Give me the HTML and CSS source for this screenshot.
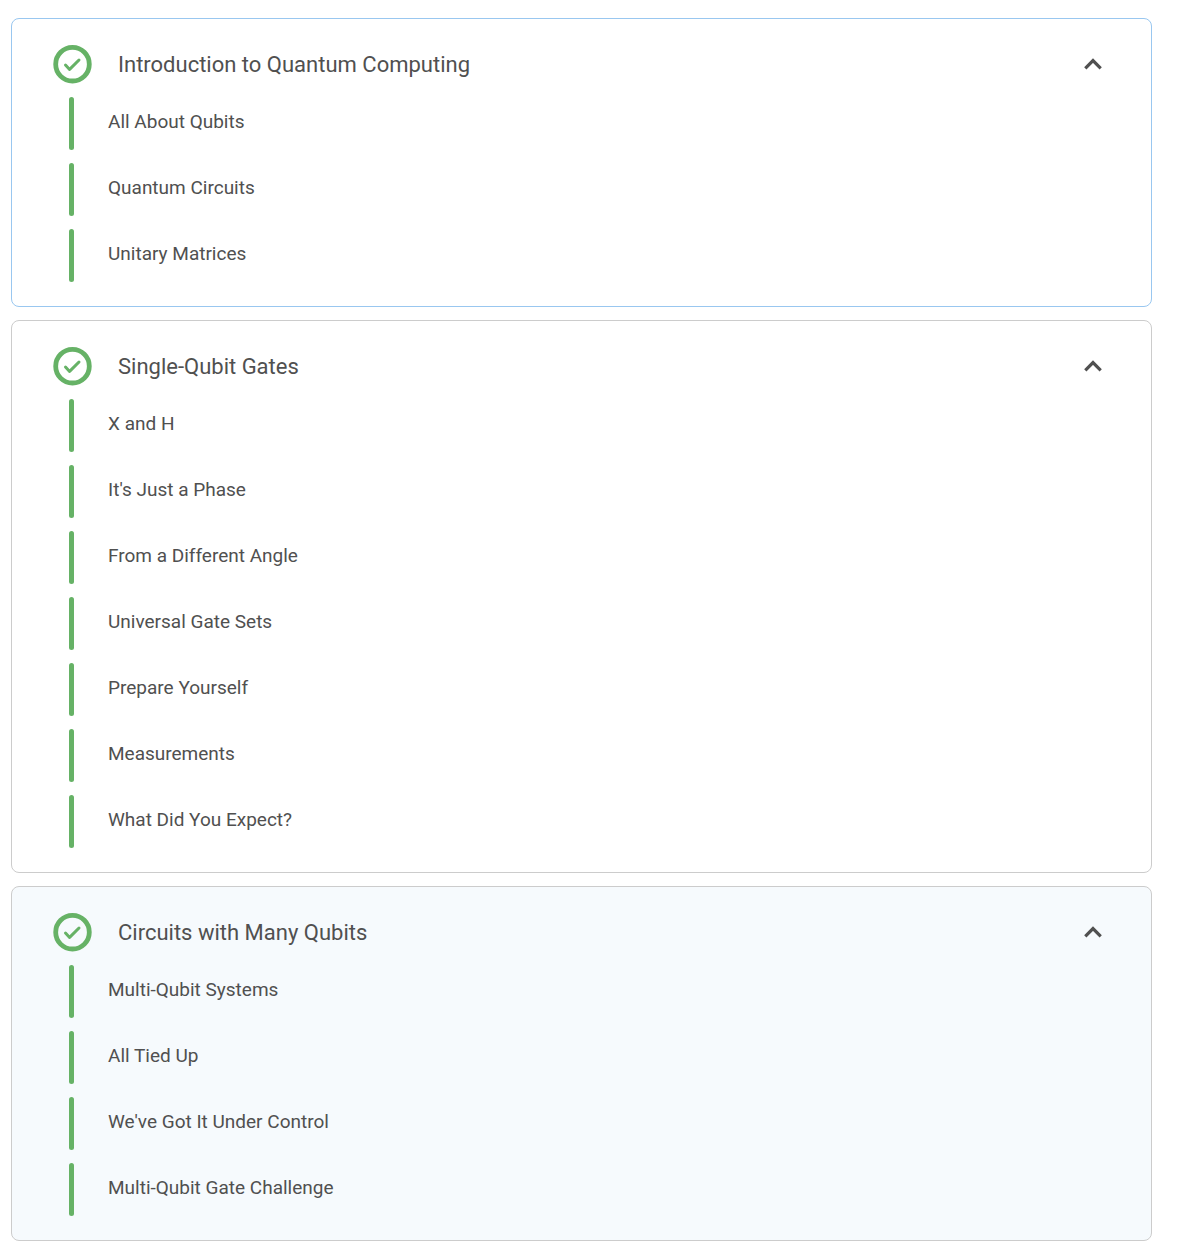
FILE: index.html
```html
<!DOCTYPE html>
<html lang="en">
<head>
<meta charset="utf-8">
<meta name="viewport" content="width=device-width, initial-scale=1">
<title>Quantum Computing</title>
<link rel="stylesheet" href="styles.css">
</head>
<body>
<svg class="sprite" aria-hidden="true">
  <symbol id="check" viewBox="0 0 39 39">
    <circle cx="19.5" cy="19.2" r="16.8" fill="none" stroke="currentColor" stroke-width="4.8"/>
    <path d="M12.5 20 16.6 24.4 26 15" fill="none" stroke="currentColor" stroke-width="3" stroke-linecap="round" stroke-linejoin="round"/>
  </symbol>
  <symbol id="chevron" viewBox="0 0 20 20">
    <path d="M2.3 13.3 10 5.6 17.7 13.3" fill="none" stroke="currentColor" stroke-width="3.2" stroke-linecap="butt" stroke-linejoin="miter"/>
  </symbol>
</svg>
<main class="chapters">
  <section class="chapter chapter-active">
    <h2 class="chapter-heading">
      <button class="chapter-toggle" type="button" aria-expanded="true">
        <svg class="chapter-check" aria-hidden="true"><use href="#check"/></svg>
        <span class="chapter-title">Introduction to Quantum Computing</span>
        <svg class="chapter-chevron" aria-hidden="true"><use href="#chevron"/></svg>
      </button>
    </h2>
    <ul class="lessons">
      <li class="lesson"><a class="lesson-link" href="#">All About Qubits</a></li>
      <li class="lesson"><a class="lesson-link" href="#">Quantum Circuits</a></li>
      <li class="lesson"><a class="lesson-link" href="#">Unitary Matrices</a></li>
    </ul>
  </section>
  <section class="chapter">
    <h2 class="chapter-heading">
      <button class="chapter-toggle" type="button" aria-expanded="true">
        <svg class="chapter-check" aria-hidden="true"><use href="#check"/></svg>
        <span class="chapter-title">Single-Qubit Gates</span>
        <svg class="chapter-chevron" aria-hidden="true"><use href="#chevron"/></svg>
      </button>
    </h2>
    <ul class="lessons">
      <li class="lesson"><a class="lesson-link" href="#">X and H</a></li>
      <li class="lesson"><a class="lesson-link" href="#">It's Just a Phase</a></li>
      <li class="lesson"><a class="lesson-link" href="#">From a Different Angle</a></li>
      <li class="lesson"><a class="lesson-link" href="#">Universal Gate Sets</a></li>
      <li class="lesson"><a class="lesson-link" href="#">Prepare Yourself</a></li>
      <li class="lesson"><a class="lesson-link" href="#">Measurements</a></li>
      <li class="lesson"><a class="lesson-link" href="#">What Did You Expect?</a></li>
    </ul>
  </section>
  <section class="chapter chapter-hover">
    <h2 class="chapter-heading">
      <button class="chapter-toggle" type="button" aria-expanded="true">
        <svg class="chapter-check" aria-hidden="true"><use href="#check"/></svg>
        <span class="chapter-title">Circuits with Many Qubits</span>
        <svg class="chapter-chevron" aria-hidden="true"><use href="#chevron"/></svg>
      </button>
    </h2>
    <ul class="lessons">
      <li class="lesson"><a class="lesson-link" href="#">Multi-Qubit Systems</a></li>
      <li class="lesson"><a class="lesson-link" href="#">All Tied Up</a></li>
      <li class="lesson"><a class="lesson-link" href="#">We've Got It Under Control</a></li>
      <li class="lesson"><a class="lesson-link" href="#">Multi-Qubit Gate Challenge</a></li>
    </ul>
  </section>
</main>
</body>
</html>
```
FILE: styles.css
```css
* {
  box-sizing: border-box;
}

body {
  margin: 0;
  background: #fff;
  color: #505050;
  font-family: Roboto, "Liberation Sans", sans-serif;
}

.sprite {
  display: none;
}

.chapters {
  display: flex;
  flex-direction: column;
  gap: 13px;
  padding: 18px 27px 4px 11px;
}

.chapter {
  padding: 26px 48px 24px 41px;
  border: 1px solid #ccc;
  border-radius: 8px;
}

.chapter-active {
  border-color: #99c7f0;
}

.chapter-hover {
  background: #f6fafd;
}

.chapter-heading {
  margin: 0;
}

.chapter-toggle {
  display: flex;
  align-items: center;
  width: 100%;
  padding: 0;
  border: 0;
  background: none;
  color: inherit;
  font: 400 22px/38px Roboto, "Liberation Sans", sans-serif;
  text-align: left;
  cursor: pointer;
}

.chapter-check {
  flex: none;
  width: 39px;
  height: 39px;
  color: #66b266;
}

.chapter-title {
  flex: 1;
  margin-left: 26px;
}

.chapter-chevron {
  flex: none;
  width: 20px;
  height: 20px;
}

.lessons {
  display: flex;
  flex-direction: column;
  gap: 13px;
  margin: 13px 0 0;
  padding: 0 0 0 16px;
  list-style: none;
}

.lesson {
  display: flex;
  gap: 34px;
}

.lesson::before {
  content: "";
  width: 5px;
  border-radius: 3px;
  background: #66b266;
}

.lesson-link {
  padding: 13px 0 16px;
  color: inherit;
  font-size: 19px;
  line-height: 24px;
  text-decoration: none;
}
```
